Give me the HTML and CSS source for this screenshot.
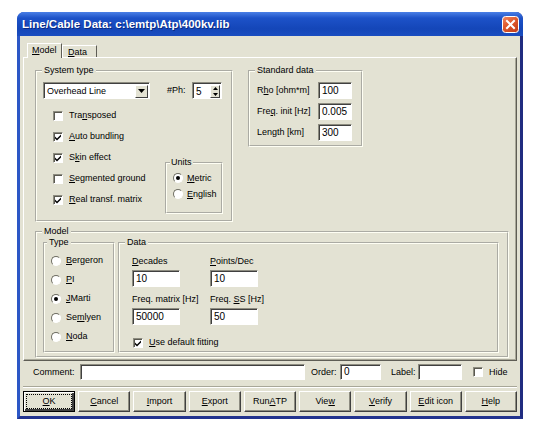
FILE: index.html
```html
<!DOCTYPE html>
<html>
<head>
  <title>Line/Cable Data</title>
  <link rel="stylesheet" href="styles.css">
</head>
<body>
  <div class="window">
    <div class="titlebar">
      <span class="title">Line/Cable Data: c:\emtp\Atp\400kv.lib</span>
      <svg class="close" width="17" height="17" viewBox="0 0 17 17">
        <defs>
          <linearGradient id="cg" x1="0" y1="0" x2="0.6" y2="1">
            <stop offset="0" stop-color="#f08a66"/>
            <stop offset="0.5" stop-color="#df5a2e"/>
            <stop offset="1" stop-color="#c8421c"/>
          </linearGradient>
        </defs>
        <rect x="0.5" y="0.5" width="16" height="16" rx="3" fill="url(#cg)" stroke="#fff"/>
        <path d="M5 5 L12 12 M12 5 L5 12" stroke="#fff" stroke-width="2" stroke-linecap="square"/>
      </svg>
    </div>

    <div class="client">
      <div class="tabs">
        <span class="tab active"><u>M</u>odel</span>
        <span class="tab"><u>D</u>ata</span>
      </div>

      <div class="panel">
        <div class="top-row">
          <fieldset class="group sys">
            <legend>System type</legend>
            <div class="sys-body">
              <div class="sys-head">
                <div class="combo">
                  <span class="combo-text">Overhead Line</span>
                  <span class="drop"><svg width="7" height="4" viewBox="0 0 7 4"><path d="M0 0h7L3.5 4z" fill="#000"/></svg></span>
                </div>
                <span class="ph">#Ph:</span>
                <div class="spin">
                  <span class="spin-text">5</span>
                  <span class="spin-btn"><svg width="5" height="9" viewBox="0 0 5 9"><path d="M2.5 0L5 3H0z M0 6h5L2.5 9z" fill="#000"/></svg></span>
                </div>
              </div>
              <div class="sys-main">
                <div class="checks">
                  <div class="row"><span class="box"></span>Tra<u>n</u>sposed</div>
                  <div class="row"><span class="box on"></span><u>A</u>uto bundling</div>
                  <div class="row"><span class="box on"></span>S<u>k</u>in effect</div>
                  <div class="row"><span class="box"></span><u>S</u>egmented ground</div>
                  <div class="row"><span class="box on"></span><u>R</u>eal transf. matrix</div>
                </div>
                <fieldset class="group units">
                  <legend>Units</legend>
                  <div class="units-body">
                    <div class="radio-row"><span class="radio on"></span><u>M</u>etric</div>
                    <div class="radio-row"><span class="radio"></span><u>E</u>nglish</div>
                  </div>
                </fieldset>
              </div>
            </div>
          </fieldset>

          <fieldset class="group std">
            <legend>Standard data</legend>
            <div class="std-body">
              <div class="std-row"><span class="std-label">R<u>h</u>o [ohm*m]</span><span class="edit std-edit">100</span></div>
              <div class="std-row"><span class="std-label">Fre<u>q</u>. init [Hz]</span><span class="edit std-edit">0.005</span></div>
              <div class="std-row"><span class="std-label">Length [km]</span><span class="edit std-edit">300</span></div>
            </div>
          </fieldset>
        </div>

        <fieldset class="group model">
          <legend>Model</legend>
          <div class="model-body">
            <fieldset class="group type">
              <legend>Type</legend>
              <div class="type-body">
                <div class="type-row"><span class="radio"></span><u>B</u>ergeron</div>
                <div class="type-row"><span class="radio"></span><u>P</u>I</div>
                <div class="type-row"><span class="radio on"></span><u>J</u>Marti</div>
                <div class="type-row"><span class="radio"></span>Se<u>m</u>lyen</div>
                <div class="type-row"><span class="radio"></span><u>N</u>oda</div>
              </div>
            </fieldset>
            <fieldset class="group data">
              <legend>Data</legend>
              <div class="data-body">
                <div class="data-grid">
                  <div class="field">
                    <span><u>D</u>ecades</span>
                    <span class="edit data-edit">10</span>
                  </div>
                  <div class="field">
                    <span><u>P</u>oints/Dec</span>
                    <span class="edit data-edit">10</span>
                  </div>
                  <div class="field">
                    <span>Freq. matrix [Hz]</span>
                    <span class="edit data-edit">50000</span>
                  </div>
                  <div class="field">
                    <span>Freq. <u>S</u>S [Hz]</span>
                    <span class="edit data-edit">50</span>
                  </div>
                </div>
                <div class="row fit"><span class="box on"></span><u>U</u>se default fitting</div>
              </div>
            </fieldset>
          </div>
        </fieldset>
      </div>

      <div class="comment-row">
        <span class="comment-label">Comment:</span>
        <span class="edit comment-edit"></span>
        <span class="order-label">Order:</span>
        <span class="edit order-edit">0</span>
        <span class="label-label">Label:</span>
        <span class="edit label-edit"></span>
        <span class="box hide-box"></span>
        <span>Hide</span>
      </div>

      <div class="buttons">
        <span class="btn default"><span class="focus"><u>O</u>K</span></span>
        <span class="btn"><u>C</u>ancel</span>
        <span class="btn"><u>I</u>mport</span>
        <span class="btn"><u>E</u>xport</span>
        <span class="btn">Run <u>A</u>TP</span>
        <span class="btn">Vie<u>w</u></span>
        <span class="btn"><u>V</u>erify</span>
        <span class="btn"><u>E</u>dit icon</span>
        <span class="btn"><u>H</u>elp</span>
      </div>
    </div>
  </div>
</body>
</html>
```

FILE: styles.css
```css
body {
  margin: 0;
  background-color: #fff;
  font-family: "Liberation Sans", Arial, sans-serif;
  font-size: 9px;
  line-height: 11px;
  color: #000;
}
.window {
  width: 506px;
  height: 407px;
  margin: 12px 0 0 17px;
  box-sizing: border-box;
  display: flex;
  flex-direction: column;
  border-style: solid;
  border-width: 0 3px 3px 3px;
  border-color: #2c57c6 #202c80 #22338e #2c57c6;
  border-radius: 7px 7px 0 0;
  background-color: #1546b8;
}
.titlebar {
  height: 24px;
  margin: 0 -3px;
  padding: 0 4px 0 5px;
  display: flex;
  align-items: center;
  justify-content: space-between;
  border-radius: 7px 7px 0 0;
  background: linear-gradient(#4a7fe6, #1d52c8 25%, #1446b8 70%, #1a4dc0);
}
.title {
  color: #fff;
  font-weight: bold;
  font-size: 11.5px;
  text-shadow: 1px 1px #0a2a80;
}
.close {
  display: block;
}
.client {
  flex: 1;
  display: flex;
  flex-direction: column;
  background-color: #e3e2d3;
}

/* tabs */
.tabs {
  display: flex;
  align-items: flex-end;
  height: 14px;
  margin: 7px 0 0 7px;
  position: relative;
  z-index: 1;
}
.tab {
  width: 35px;
  height: 12px;
  box-sizing: border-box;
  padding-left: 5px;
  border: 1px solid;
  border-color: #fff #5e5d55 transparent #fff;
  border-bottom: none;
  line-height: 12px;
}
.tab.active {
  height: 15px;
  margin-bottom: -1px;
  padding-left: 4px;
  background-color: #e3e2d3;
  line-height: 13px;
}
.panel {
  width: 494px;
  height: 304px;
  margin-left: 3px;
  box-sizing: border-box;
  border: 1px solid;
  border-color: #fff #5e5d55 #5e5d55 #fff;
  box-shadow: inset -1px -1px #a8a798;
  padding: 7px 0 0 11px;
}

/* group boxes */
.group {
  margin: 0;
  padding: 0;
  min-width: 0;
  box-sizing: border-box;
  border: 2px groove #fffff4;
}
.group legend {
  margin-left: 5px;
  padding: 0 2px;
  line-height: 11px;
}
.top-row {
  display: flex;
  align-items: flex-start;
}
.sys {
  width: 198px;
  height: 157px;
}
.sys-body {
  padding: 6px 0 0 6px;
}
.sys-head {
  display: flex;
  align-items: center;
}
.combo {
  width: 107px;
  height: 17px;
  box-sizing: border-box;
  display: flex;
  align-items: center;
  justify-content: space-between;
  background-color: #fff;
  border: 1px solid;
  border-color: #8d8c80 #fff #fff #8d8c80;
  box-shadow: inset 1px 1px #404040;
  padding: 1px 1px 0 3px;
}
.drop {
  width: 13px;
  height: 13px;
  box-sizing: border-box;
  display: flex;
  align-items: center;
  justify-content: center;
  background-color: #e3e2d3;
  border: 1px solid;
  border-color: #fff #404040 #404040 #fff;
}
.ph {
  margin-left: 17px;
  width: 25px;
}
.spin {
  width: 30px;
  height: 17px;
  box-sizing: border-box;
  display: flex;
  align-items: center;
  justify-content: space-between;
  background-color: #fff;
  border: 1px solid;
  border-color: #8d8c80 #fff #fff #8d8c80;
  box-shadow: inset 1px 1px #404040;
  padding: 1px 1px 0 3px;
  font-size: 10px;
}
.spin-btn {
  width: 10px;
  height: 13px;
  box-sizing: border-box;
  display: flex;
  align-items: center;
  justify-content: center;
  background-color: #e3e2d3;
  border: 1px solid;
  border-color: #fff #404040 #404040 #fff;
}
.sys-main {
  display: flex;
  align-items: flex-start;
  margin-top: 6px;
}
.checks {
  width: 122px;
  padding-left: 10px;
  box-sizing: border-box;
}
.row {
  height: 21px;
  display: flex;
  align-items: center;
}
.box {
  width: 10px;
  height: 10px;
  box-sizing: border-box;
  margin-right: 6px;
  flex-shrink: 0;
  background-color: #fff;
  border: 1px solid;
  border-color: #8d8c80 #fff #fff #8d8c80;
  box-shadow: inset 1px 1px #5a5950;
}
.box.on {
  background: #fff url("data:image/svg+xml,%3Csvg xmlns='http://www.w3.org/2000/svg' width='8' height='8'%3E%3Cpath d='M1 3.5l2 2 4-4v2l-4 4-2-2z' fill='%23000'/%3E%3C/svg%3E") no-repeat 0 0;
}
.units {
  width: 58px;
  height: 57px;
  margin-top: 52px;
}
.units legend {
  margin-left: 3px;
  padding: 0 1px;
}
.units-body {
  padding: 2px 0 0 6px;
}
.radio-row {
  height: 16px;
  display: flex;
  align-items: center;
}
.radio {
  width: 10px;
  height: 10px;
  box-sizing: border-box;
  margin-right: 4px;
  flex-shrink: 0;
  border-radius: 50%;
  background-color: #fff;
  border: 1px solid;
  border-color: #6e6d62 #fff #fff #6e6d62;
  display: flex;
  align-items: center;
  justify-content: center;
}
.radio.on::after {
  content: "";
  width: 4px;
  height: 4px;
  border-radius: 50%;
  background-color: #000;
}
.std {
  width: 115px;
  height: 82px;
  margin-left: 15px;
}
.std-body {
  padding: 6px 0 0 7px;
}
.std-row {
  height: 21px;
  display: flex;
  align-items: flex-start;
}
.std-label {
  width: 61px;
  line-height: 17px;
}
.edit {
  height: 17px;
  box-sizing: border-box;
  background-color: #fff;
  border: 1px solid;
  border-color: #8d8c80 #fff #fff #8d8c80;
  box-shadow: inset 1px 1px #404040;
  padding: 2px 0 0 3px;
  font-size: 10px;
  line-height: 12px;
}
.std-edit {
  width: 34px;
}
.model {
  width: 474px;
  height: 132px;
  margin-top: 4px;
}
.model-body {
  display: flex;
  gap: 3px;
  padding-left: 6px;
}
.type {
  width: 72px;
  height: 116px;
}
.type legend {
  margin-left: 2px;
}
.type-body {
  padding: 3px 0 0 6px;
}
.type-row {
  height: 19px;
  display: flex;
  align-items: center;
}
.type-row .radio {
  margin-right: 5px;
}
.data {
  width: 381px;
  height: 116px;
}
.data-body {
  padding: 8px 0 0 12px;
}
.data-grid {
  display: grid;
  grid-template-columns: 78px 60px;
  row-gap: 7px;
}
.field {
  display: flex;
  flex-direction: column;
  gap: 3px;
}
.data-edit {
  width: 48px;
}
.fit {
  height: 13px;
  margin-top: 11px;
  padding-left: 1px;
}

/* comment and buttons */
.comment-row {
  display: flex;
  align-items: center;
  height: 16px;
  margin-top: 3px;
  padding-left: 13px;
}
.comment-row .edit {
  height: 16px;
  padding-top: 1px;
}
.comment-label {
  width: 47px;
}
.comment-edit {
  width: 225px;
}
.order-label {
  width: 29px;
  margin-left: 6px;
}
.order-edit {
  width: 41px;
}
.label-label {
  width: 27px;
  margin-left: 10px;
}
.label-edit {
  width: 44px;
}
.hide-box {
  margin-left: 11px;
}
.buttons {
  display: flex;
  gap: 3px;
  margin: 6px 0 0 3px;
  padding-top: 4px;
  width: 494px;
  border-top: 1px solid #a8a798;
  box-shadow: inset 0 1px #fff;
}
.btn {
  flex: 1;
  height: 21px;
  box-sizing: border-box;
  display: flex;
  align-items: center;
  justify-content: center;
  border: 1px solid;
  border-color: #fff #404040 #404040 #fff;
  box-shadow: inset -1px -1px #8d8c80;
}
.btn.default {
  border-color: #000;
  box-shadow: inset 1px 1px #fff, inset -2px -2px #404040;
}
.focus {
  width: 44px;
  height: 13px;
  border: 1px dotted #000;
  text-align: center;
  line-height: 13px;
}
```
